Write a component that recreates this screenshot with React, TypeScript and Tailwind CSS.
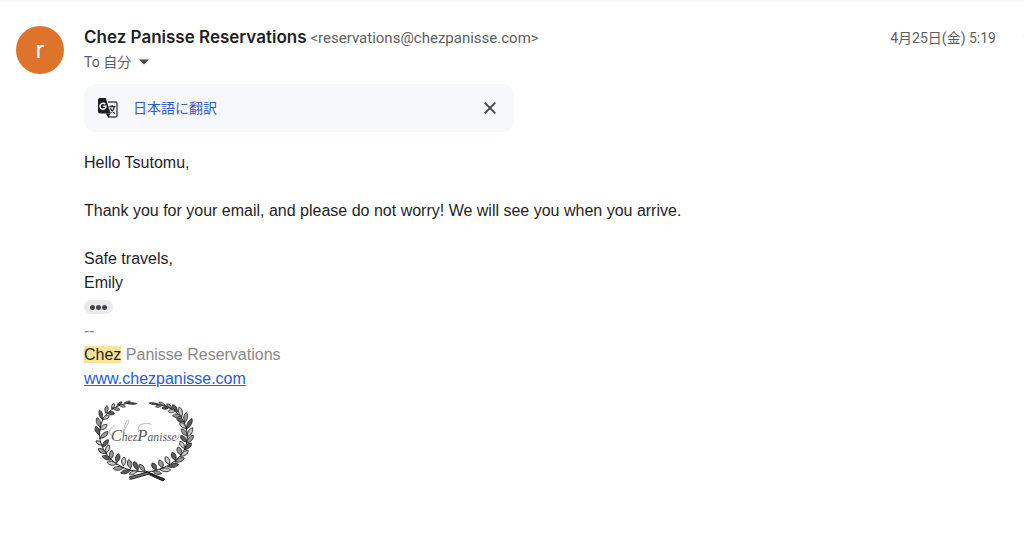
import { ReactNode } from "react";

const sansUi = "font-['Roboto','Noto_Sans_CJK_JP',sans-serif]";

// Each leaf runs from its base (x1, y1) to its tip (x2, y2); w is the half width.
type Leaf = [number, number, number, number, number];

const leftLeaves: Leaf[] = [
  [128, 37, 158, 38, 3],
  [122, 36, 139, 31, 3],
  [104, 42, 124, 47, 4],
  [100, 42, 114, 33, 4],
  [86, 52, 108, 56, 5],
  [84, 52, 90, 38, 5],
  [70, 66, 92, 67, 6],
  [66, 66, 69, 44, 6],
  [56, 84, 76, 74, 6],
  [54, 84, 47, 58, 6],
  [48, 108, 39, 80, 7],
  [49, 116, 69, 101, 7],
  [46, 132, 35, 106, 7],
  [49, 142, 72, 122, 7],
  [54, 162, 36, 150, 6],
  [56, 168, 73, 146, 7],
  [66, 188, 43, 173, 7],
  [66, 186, 75, 162, 7],
  [82, 206, 55, 195, 7],
  [80, 204, 84, 178, 7],
  [98, 220, 69, 214, 7],
  [98, 214, 104, 188, 8],
  [118, 231, 88, 233, 7],
  [118, 224, 120, 198, 8],
  [140, 238, 110, 246, 7],
  [140, 232, 134, 206, 8],
  [160, 240, 136, 250, 6],
  [162, 237, 150, 212, 8],
  [182, 242, 167, 220, 7],
];

const rightLeaves: Leaf[] = [
  [222, 40, 196, 36, 3],
  [234, 43, 215, 47, 4],
  [244, 44, 225, 34, 4],
  [254, 50, 234, 51, 5],
  [264, 52, 248, 39, 5],
  [274, 60, 252, 61, 6],
  [280, 62, 266, 41, 6],
  [290, 74, 266, 74, 6],
  [293, 78, 286, 48, 7],
  [299, 92, 278, 82, 7],
  [303, 94, 307, 64, 7],
  [306, 112, 287, 95, 7],
  [308, 114, 324, 83, 7],
  [309, 134, 292, 114, 7],
  [310, 137, 326, 110, 7],
  [308, 153, 290, 134, 7],
  [309, 156, 328, 133, 7],
  [301, 172, 288, 151, 7],
  [303, 176, 322, 156, 7],
  [290, 191, 282, 168, 8],
  [290, 196, 313, 179, 7],
  [275, 208, 264, 184, 8],
  [274, 213, 301, 201, 7],
  [256, 220, 245, 197, 8],
  [252, 227, 284, 220, 7],
  [236, 230, 226, 207, 8],
  [228, 236, 260, 237, 7],
  [216, 236, 205, 216, 8],
  [206, 241, 232, 248, 6],
];

function leafPath([x1, y1, x2, y2, w]: Leaf) {
  const dx = x2 - x1;
  const dy = y2 - y1;
  const len = Math.hypot(dx, dy);
  const nx = (-dy / len) * w * 1.1;
  const ny = (dx / len) * w * 1.1;
  const ax = x1 + dx * 0.35;
  const ay = y1 + dy * 0.35;
  const bx = x1 + dx * 0.75;
  const by = y1 + dy * 0.75;
  return `M${x1} ${y1}C${ax + nx} ${ay + ny} ${bx + nx} ${by + ny} ${x2} ${y2}C${bx - nx} ${by - ny} ${ax - nx} ${ay - ny} ${x1} ${y1}Z`;
}

function Branch({ leaves }: { leaves: Leaf[] }) {
  return (
    <g>
      {leaves.map((leaf, i) => (
        <path
          key={i}
          d={leafPath(leaf)}
          fill={i % 3 === 0 ? "#5c5c5c" : i % 3 === 1 ? "#9a9a9a" : "#c4c4c4"}
          stroke="#222"
          strokeWidth="2.6"
        />
      ))}
    </g>
  );
}

function WreathLogo() {
  return (
    <svg viewBox="0 0 360 300" className="h-[100px] w-[120px]" fill="none" strokeLinecap="round" role="img" aria-label="Chez Panisse">
      <path d="M140 36C105 38 76 56 60 80C44 108 42 142 56 170C72 204 104 228 142 238C168 244 184 240 206 250L238 267" stroke="#222" strokeWidth="3" />
      <path d="M214 38C250 42 284 62 298 90C314 120 314 152 298 182C278 214 244 230 212 239C188 244 172 250 138 264" stroke="#222" strokeWidth="3" />
      <Branch leaves={leftLeaves} />
      <Branch leaves={rightLeaves} />
      <path d="M186 241L242 264L237 270L198 252Z" fill="#333" stroke="#1c1c1c" strokeWidth="3" />
      <path d="M192 243L136 258L140 265L196 249Z" fill="#777" stroke="#1c1c1c" strokeWidth="3" />
      <text x="80" y="151" fontSize="35" fill="#5a5a5a" className="font-['Liberation_Serif',serif] italic">
        <tspan fontSize="50">C</tspan>hez<tspan fontSize="50">P</tspan>anisse
      </text>
      <path d="M86 132C72 134 72 112 92 104M120 122C126 104 140 90 132 88C126 90 120 108 118 124M164 122C154 104 180 90 202 100M276 146C284 144 288 134 284 126" stroke="#999" strokeWidth="2" />
    </svg>
  );
}

function TranslateIcon() {
  return (
    <svg viewBox="0 0 24 24" className="size-6" fill="none" aria-hidden="true">
      <path d="M12 6H19.500A1.500 1.500 0 0 1 21 7.500V19.500A1.500 1.500 0 0 1 19.500 21H12.500L10.500 17.500" stroke="#444746" strokeWidth="1.400" />
      <path d="M4 2H9.800L14.500 17.500H4A2 2 0 0 1 2 15.500V4A2 2 0 0 1 4 2Z" fill="#1f1f1f" />
      <path d="M10.500 17.500H14.500L12.500 21.500Z" fill="#1f1f1f" />
      <path d="M9.300 8.300A3 3 0 1 0 10 10.300H7.200" stroke="#fff" strokeWidth="1.400" />
      <path d="M13.200 10.500H19.500M16.200 9V10.500M18.300 10.500C17.800 13.500 16.500 15.500 14.500 16.800M14.300 12C15 14 16.700 16 19 17.500" stroke="#333" strokeWidth="1.300" />
    </svg>
  );
}

function Line({ children }: { children?: ReactNode }) {
  return <p className="min-h-6">{children}</p>;
}

export default function App() {
  return (
    <main className={`overflow-hidden border-t-2 border-[#f6f6f6] bg-white pt-6 pb-12 text-[#1f1f1f] ${sansUi}`}>
      <article className="flex items-start pl-4">
        <div className="mr-5 flex size-12 shrink-0 items-center justify-center rounded-full bg-[#de732c] font-['Inter',sans-serif] text-2xl font-normal text-white">r</div>
        <div className="min-w-0 flex-1">
          <header className="flex h-6 items-center">
            <h1 className="font-['Inter',sans-serif] text-[17px] font-semibold whitespace-nowrap">Chez Panisse Reservations</h1>
            <span className="ml-1 text-[15px] whitespace-nowrap text-[#5e5e5e]">&lt;reservations@chezpanisse.com&gt;</span>
            <time className="mr-[27px] ml-auto text-sm whitespace-nowrap text-[#5e5e5e]">4月25日(金) 5:19</time>
            <button type="button" aria-label="Star" className="-mr-[19px] size-5 shrink-0">
              <svg viewBox="0 0 20 20" className="size-5" fill="#f2c766" aria-hidden="true">
                <path d="M10 1L12.500 7.300L20 8L14 12L16 19L10 15L4 19L6 12.500L0 8.500L7.500 7.300Z" />
              </svg>
            </button>
          </header>
          <button type="button" className="flex h-6 items-center text-sm text-[#5e5e5e]">
            To 自分
            <svg viewBox="0 0 10 6" className="ml-2 h-[6px] w-[10px]" aria-hidden="true">
              <path d="M0 0.500H10L5 5.500Z" fill="#444746" />
            </svg>
          </button>
          <section className="mt-[10px] flex h-12 max-w-[430px] items-center rounded-xl bg-[#f6f8fc] pr-3 pl-3">
            <TranslateIcon />
            <button type="button" className="ml-[13px] text-sm text-[#2f5bd0]">日本語に翻訳</button>
            <button type="button" aria-label="Close" className="ml-auto flex size-6 items-center justify-center">
              <svg viewBox="0 0 12 12" className="size-3" fill="none" aria-hidden="true">
                <path d="M0.700 0.700L11.300 11.300M11.300 0.700L0.700 11.300" stroke="#444746" strokeWidth="1.900" />
              </svg>
            </button>
          </section>
          <div className="mt-[19px] font-['Liberation_Sans',Arial,sans-serif] text-base leading-6">
            <Line>Hello Tsutomu,</Line>
            <Line />
            <Line>Thank you for your email, and please do not worry! We will see you when you arrive.</Line>
            <Line />
            <Line>Safe travels,</Line>
            <Line>Emily</Line>
            <div className="flex h-6 items-center">
              <button type="button" aria-label="Show trimmed content" className="flex h-[14px] w-[29px] items-center justify-center gap-px rounded-full bg-[#e8eaed]">
                <span className="size-[5px] rounded-full bg-[#444746]" />
                <span className="size-[5px] rounded-full bg-[#444746]" />
                <span className="size-[5px] rounded-full bg-[#444746]" />
              </button>
            </div>
            <div className="text-[#888888]">
              <Line>--</Line>
              <Line>
                <mark className="bg-[#fbe29b] text-[#1f1f1f]">Chez</mark> Panisse Reservations
              </Line>
              <Line>
                <a href="http://www.chezpanisse.com" className="text-[#2a5bd7] underline">www.chezpanisse.com</a>
              </Line>
            </div>
            <WreathLogo />
          </div>
        </div>
      </article>
    </main>
  );
}
